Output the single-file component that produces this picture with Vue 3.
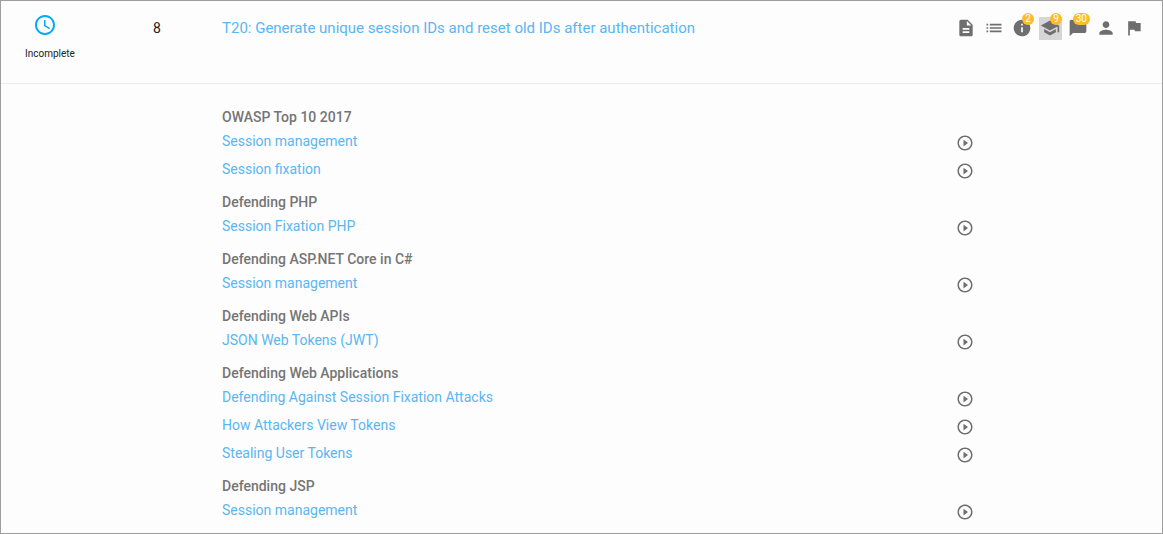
<script setup>
const actions = [
  { name: 'Description', path: 'M14 2H6c-1.1 0-1.99.9-1.99 2L4 20c0 1.1.89 2 1.99 2H18c1.1 0 2-.9 2-2V8l-6-6zm2 16H8v-2h8v2zm0-4H8v-2h8v2zm-3-5V3.5L18.5 9H13z' },
  { name: 'List', path: 'M3 13h2v-2H3v2zm0 4h2v-2H3v2zm0-8h2V7H3v2zm4 4h14v-2H7v2zm0 4h14v-2H7v2zM7 7v2h14V7H7z' },
  { name: 'Information', count: 2, path: 'M12 2C6.48 2 2 6.48 2 12s4.48 10 10 10 10-4.48 10-10S17.52 2 12 2zm1 15h-2v-6h2v6zm0-8h-2V7h2v2z' },
  { name: 'Training', count: 9, active: true, path: 'M5 13.18v4L12 21l7-3.82v-4L12 17l-7-3.82zM12 3 1 9l11 6 9-4.91V17h2V9L12 3z' },
  { name: 'Comments', count: 30, path: 'M20 2H4c-1.1 0-1.99.9-1.99 2L2 22l4-4h14c1.1 0 2-.9 2-2V4c0-1.1-.9-2-2-2z' },
  { name: 'Assignee', path: 'M12 12c2.21 0 4-1.79 4-4s-1.79-4-4-4-4 1.79-4 4 1.79 4 4 4zm0 2c-2.67 0-8 1.34-8 4v2h16v-2c0-2.66-5.33-4-8-4z' },
  { name: 'Flag', path: 'M14.4 6 14 4H5v17h2v-7h5.6l.4 2h7V6z' },
]

const groups = [
  { title: 'OWASP Top 10 2017', links: ['Session management', 'Session fixation'] },
  { title: 'Defending PHP', links: ['Session Fixation PHP'] },
  { title: 'Defending ASP.NET Core in C#', links: ['Session management'] },
  { title: 'Defending Web APIs', links: ['JSON Web Tokens (JWT)'] },
  { title: 'Defending Web Applications', links: ['Defending Against Session Fixation Attacks', 'How Attackers View Tokens', 'Stealing User Tokens'] },
  { title: 'Defending JSP', links: ['Session management'] },
]
</script>

<template>
  <main class="task">
    <header class="head">
      <div class="status">
        <svg class="clock" viewBox="0 0 24 24" aria-hidden="true">
          <path d="M11.99 2C6.47 2 2 6.48 2 12s4.47 10 9.99 10C17.52 22 22 17.52 22 12S17.52 2 11.99 2zM12 20c-4.42 0-8-3.58-8-8s3.58-8 8-8 8 3.58 8 8-3.58 8-8 8zm.5-13H11v6l5.25 3.15.75-1.23-4.5-2.67z" />
        </svg>
        <span class="status-label">Incomplete</span>
      </div>
      <span class="priority">8</span>
      <a class="title" href="#">T20: Generate unique session IDs and reset old IDs after authentication</a>
      <nav class="actions">
        <button
          v-for="action in actions"
          :key="action.name"
          type="button"
          class="action"
          :class="{ active: action.active }"
          :aria-label="action.name"
        >
          <svg class="icon" viewBox="0 0 24 24" aria-hidden="true"><path :d="action.path" /></svg>
          <span v-if="action.count" class="badge">{{ action.count }}</span>
        </button>
      </nav>
    </header>

    <div class="body">
      <section v-for="group in groups" :key="group.title" class="group">
        <h2 class="group-title">{{ group.title }}</h2>
        <ul class="links">
          <li v-for="link in group.links" :key="link" class="row">
            <a class="link" href="#">{{ link }}</a>
            <button type="button" class="play" :aria-label="'Play ' + link">
              <svg class="play-icon" viewBox="0 0 24 24" aria-hidden="true">
                <path d="M10 16.5l6-4.5-6-4.5v9zM12 2C6.48 2 2 6.48 2 12s4.48 10 10 10 10-4.48 10-10S17.52 2 12 2zm0 18c-4.41 0-8-3.59-8-8s3.59-8 8-8 8 3.59 8 8-3.59 8-8 8z" />
              </svg>
            </button>
          </li>
        </ul>
      </section>
    </div>
  </main>
</template>

<style>
body {
  background: #fdfdfd;
}
</style>

<style scoped>
.task {
  box-sizing: border-box;
  min-height: 100vh;
  border: 1px solid #9e9e9e;
  background: #fdfdfd;
  font-family: Roboto, "Liberation Sans", sans-serif;
  font-size: 14px;
  color: #212121;
}

.head {
  display: grid;
  grid-template-columns: 128px 69px 1fr 191px;
  align-items: start;
  padding: 12px 16px 21px 24px;
  border-bottom: 1px solid #eee;
}

.status {
  display: flex;
  flex-direction: column;
}

.clock {
  width: 24px;
  height: 24px;
  margin-left: 8px;
  fill: #03a9f4;
}

.status-label {
  margin-top: 9px;
  font-size: 10px;
  line-height: 16px;
}

.priority {
  margin-top: 4px;
  line-height: 22px;
}

.title {
  margin-top: 4px;
  font-size: 15px;
  line-height: 22px;
  color: #5ab6f2;
  text-decoration: none;
}

.actions {
  display: flex;
  gap: 5px;
  margin-top: 4px;
}

.action {
  position: relative;
  display: flex;
  align-items: flex-start;
  justify-content: flex-start;
  width: 23px;
  height: 23px;
  padding: 1px;
  border: 0;
  background: transparent;
}

.active {
  background: #d6d6d6;
}

.icon {
  flex: none;
  width: 20px;
  height: 20px;
  fill: #6e6e6e;
}

.badge {
  position: absolute;
  top: -4px;
  right: 0;
  box-sizing: border-box;
  min-width: 12px;
  padding: 0 3px;
  border-radius: 6px;
  background: #fdbc2c;
  color: #fff;
  font-family: Roboto, "Liberation Sans", sans-serif;
  font-size: 10px;
  line-height: 12px;
  text-align: center;
}

.body {
  display: flex;
  flex-direction: column;
  gap: 9px;
  padding: 23px 16px 8px 221px;
}

.group-title {
  margin: 0;
  font-size: 14px;
  font-weight: 500;
  line-height: 20px;
  color: #757575;
}

.links {
  margin: 0;
  padding: 0;
  list-style: none;
}

.row {
  display: grid;
  grid-template-columns: 1fr 191px;
  align-items: end;
  height: 28px;
}

.link {
  justify-self: start;
  line-height: 28px;
  color: #5ab6f2;
  text-decoration: none;
}

.play {
  display: flex;
  justify-self: start;
  margin: 0;
  padding: 0 1px 3px;
  border: 0;
  background: transparent;
}

.play-icon {
  width: 18px;
  height: 18px;
  fill: #6e6e6e;
}
</style>
